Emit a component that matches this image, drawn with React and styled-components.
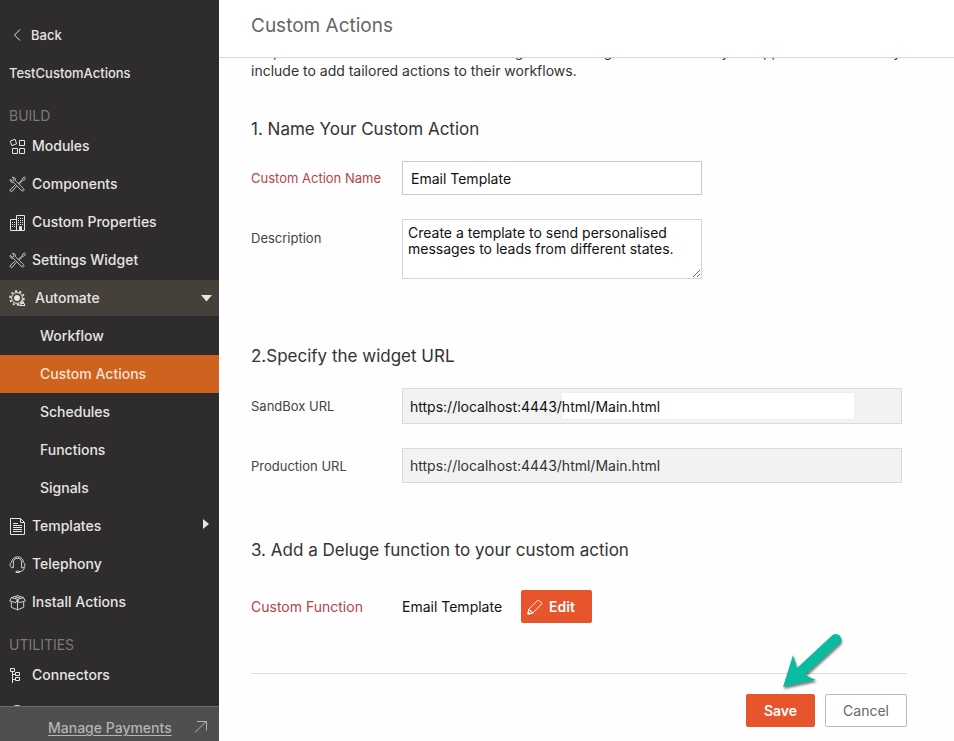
import React, { useState } from "react";
import styled, { createGlobalStyle, css } from "styled-components";

const GlobalStyle = createGlobalStyle`
  * {
    box-sizing: border-box;
  }
  body {
    margin: 0;
    font-family: Inter, "Open Sans", sans-serif;
    font-size: 14px;
    line-height: 20px;
    color: #333;
    background: #fefefe;
  }
  button, input, textarea {
    font: inherit;
  }
`;

const Page = styled.div`
  display: flex;
  height: 100vh;
`;

/* sidebar */
const Sidebar = styled.aside`
  display: flex;
  flex-direction: column;
  flex: 0 0 219px;
  background: #2e2c2d;
  color: #e6e4e4;
  font-weight: 500;
`;

const Nav = styled.nav`
  flex: 1;
  min-height: 0;
  overflow: hidden;
  padding-top: 16px;
`;

const rowStyles = css`
  display: flex;
  align-items: center;
  width: 100%;
  height: 38px;
  padding: 0 7px 0 9px;
  border: 0;
  background: none;
  color: inherit;
  text-decoration: none;
  text-align: left;
`;

const NavLink = styled.a`
  ${rowStyles}
  gap: 6px;
`;

const BackLink = styled(NavLink)`
  gap: 9px;
  padding-left: 13px;
  font-size: 13px;
`;

const ProjectName = styled.div`
  ${rowStyles}
  font-size: 13px;
`;

const GroupToggle = styled.button`
  ${rowStyles}
  gap: 9px;
  height: 36px;
  margin: 1px 0;
  background: #45413a;
  cursor: pointer;
`;

const SubLink = styled.a`
  ${rowStyles}
  padding-left: 40px;
  background: ${(props) => (props.$active ? "#cd631e" : "none")};
  color: ${(props) => (props.$active ? "#f8e3d6" : "inherit")};
`;

const NavHeading = styled.h2`
  margin: 0;
  padding: 14px 9px 0;
  height: 35px;
  font-size: 14px;
  font-weight: 400;
  color: #7b797a;
`;

const Grow = styled.span`
  flex: 1;
`;

const SidebarFooter = styled.div`
  display: flex;
  align-items: center;
  justify-content: space-between;
  flex: 0 0 35px;
  padding: 8px 11px 0 48px;
  border-top: 1px solid #6c6c6c;
  background: #4f4f4f;
`;

const FooterLink = styled.a`
  color: #b3b3b3;
  text-underline-offset: 2px;
`;

/* main column */
const Main = styled.main`
  display: flex;
  flex-direction: column;
  flex: 1;
  min-width: 0;
`;

const Header = styled.header`
  flex: 0 0 58px;
  padding: 13px 32px 0;
  border-bottom: 1px solid #d6d8d7;
  background: #fff;
`;

const Title = styled.h1`
  margin: 0;
  font-size: 19px;
  line-height: 26px;
  font-weight: 400;
  color: #666;
`;

const Content = styled.div`
  flex: 1;
  min-height: 0;
  overflow: hidden;
  padding: 0 47px 0 32px;
`;

const Intro = styled.p`
  margin: -16px 0 0;
  line-height: 19px;
`;

const Section = styled.section`
  padding-top: ${(props) => props.$top}px;
`;

const SectionTitle = styled.h2`
  margin: 0 0 20px;
  font-size: 17px;
  line-height: 24px;
  font-weight: 400;
`;

const Field = styled.div`
  display: grid;
  grid-template-columns: 151px minmax(0, 500px);
  align-items: ${(props) => props.$align || "center"};
  margin-top: ${(props) => (props.$spaced ? 28 : 0)}px;
  & + & {
    margin-top: 24px;
  }
`;

const Label = styled.label`
  font-size: 13px;
  color: ${(props) => (props.$required ? "#b5444b" : "#444")};
`;

const TopLabel = styled(Label)`
  padding-top: 9px;
`;

const FunctionLabel = styled.span`
  color: #b5444b;
`;

const TextInput = styled.input`
  width: 300px;
  height: 34px;
  padding: 0 8px;
  border: 1px solid #c8c8c8;
  background: #fff;
  color: #111;
`;

const TextArea = styled.textarea`
  display: block;
  width: 300px;
  height: 60px;
  padding: 5px;
  border: 1px solid #d6d6d6;
  background: #fff;
  color: #111;
  line-height: 16px;
`;

const UrlBox = styled.div`
  display: flex;
  align-items: baseline;
  height: 36px;
  padding: 3px 46px 0 7px;
  border: 1px solid #dadada;
  background: #f2f2f2;
  color: #111;
`;

const UrlInput = styled.input`
  flex: 1;
  min-width: 0;
  height: 28px;
  padding: 0;
  border: 1px solid #eee;
  border-left: 0;
  background: #fff;
  color: #111;
`;

const ReadOnlyUrl = styled.input`
  width: 100%;
  height: 35px;
  padding: 0 7px;
  border: 1px solid #dadada;
  background: #f2f2f2;
  color: #333;
`;

const FunctionValue = styled.div`
  display: flex;
  align-items: center;
  gap: 19px;
  color: #111;
`;

const Button = styled.button`
  display: inline-flex;
  align-items: center;
  justify-content: center;
  gap: 6px;
  height: 33px;
  padding: 0 17px;
  border: 1px solid ${(props) => (props.$primary ? "#e6552b" : "#bbb")};
  border-radius: 2px;
  background: ${(props) => (props.$primary ? "#e6552b" : "#fff")};
  color: ${(props) => (props.$primary ? "#fff" : "#666")};
  font-weight: ${(props) => (props.$primary ? 600 : 400)};
  cursor: pointer;
`;

const EditButton = styled(Button)`
  padding: 0 16px 0 5px;
`;

const Actions = styled.div`
  position: relative;
  display: flex;
  justify-content: flex-end;
  gap: 10px;
  margin-top: 50px;
  padding-top: 20px;
  border-top: 1px solid #dcdcdc;
`;

const Pointer = styled.svg`
  position: absolute;
  right: 61px;
  top: -44px;
  filter: drop-shadow(1px 2px 1px rgba(0, 0, 0, 0.5));
`;

/* icons */
const Icon = ({ size = 17, children, ...rest }) => (
  <svg
    width={size}
    height={size}
    viewBox={`0 0 ${size} ${size}`}
    fill="none"
    stroke="currentColor"
    aria-hidden="true"
    {...rest}
  >
    {children}
  </svg>
);

const ModulesIcon = () => (
  <Icon>
    <path d="M1.2 3.1 6 1.2l1.6 4.6-4.8 1.9z" />
    <path d="M10.5 2.5h5v5h-5zM3.5 10.5h5v5h-5zM10.5 10.5h5v5h-5z" />
  </Icon>
);

const ToolsIcon = () => (
  <Icon strokeWidth="0.8">
    <path d="M3.2 1.4 5 3.2l-.3 1.5-1.5.3-1.9-1.8C.8 5 2.3 7 4.6 6.4l7.9 8.2c1.4 1.4 3.4-.5 2.1-1.9L6.4 4.7C7 2.4 5.2.7 3.2 1.4z" />
    <path d="m9.6 7.2 3.8-3.9.3-1.3 1.9-1 .9.9-1 1.9-1.4.4-3.8 3.8M7.4 10.2l-4 4.9c-1.3 1.3-3.1-.4-1.9-1.8l4.6-4.2" />
    <path d="m3 13.6.5.5M13 13.3l.6.6" />
  </Icon>
);

const BuildingsIcon = () => (
  <Icon>
    <path d="M1.5 16.5v-11h6v11zM7.5 16.5v-15h8v15z" />
    <path strokeDasharray="1 1" d="M3.5 8v6M5.5 8v6M9.5 4v7M11.5 4v7M13.5 4v7" />
    <path fill="currentColor" d="M10.5 12.5h2v4h-2z" />
  </Icon>
);

const GearIcon = () => (
  <Icon>
    <circle cx="8" cy="8" r="5.4" />
    <circle cx="8" cy="8" r="6.9" strokeWidth="1.6" strokeDasharray="2.2 2.13" />
    <circle cx="8" cy="8" r="3" fill="currentColor" stroke="none" />
    <path d="m10.5 15.5 3-5 2.5 5zM12 14l3-1" />
  </Icon>
);

const PageIcon = () => (
  <Icon>
    <path d="M1.5.5h10l4 4v12h-14z" />
    <path d="M11.5.5v4h4M4 5.5h5M4 7.5h9M4 9.5h9M4 11.5h9M4 13.5h9" />
  </Icon>
);

const HeadsetIcon = () => (
  <Icon strokeWidth="0.9">
    <path d="M2.5 6.3C3.5-1 14-1 14.4 6.3M2.5 6.3C.6 7.2.5 10.7 3 11.7h1.4V5.8M14.4 6.3c2 1.2 2 4.8-.3 5.5h-1.5V5.8M4.4 6c.3-5 7.9-5 8.2 0" />
    <path d="M15.3 11.2c0 3-2 4.3-5.2 4.4M7 15.2h3.4v1.3H7z" />
  </Icon>
);

const BoxIcon = () => (
  <Icon strokeWidth="0.9">
    <path d="m8.5 5.3-6-1.7L.7 6.9l6 1.8 1.8-3.4 1.8 3.4 6-1.8-1.8-3.3zM2.5 3.6l6-2 6 2M8.5 5.3v10.3M2.3 7.6v5.7l6.2 2.5 6.2-2.5V7.6" />
    <path d="m5.5 4.4 3-1.3 3 1.3" />
  </Icon>
);

const TreeIcon = () => (
  <Icon>
    <path d="M1.5 1.5h4v3h-4zM6.5 5.5h4v3h-4zM6.5 10.5h4v3h-4z" />
    <path d="M3.5 4.5V16M3.5 7.5h3M3.5 12.5h3" />
  </Icon>
);

const CircleIcon = () => (
  <Icon>
    <circle cx="8" cy="8" r="7.5" />
  </Icon>
);

const ChevronLeft = () => (
  <svg width="9" height="14" viewBox="0 0 9 14" fill="none" stroke="currentColor" aria-hidden="true">
    <path d="M7 1.5 1.5 7 7 12.5" />
  </svg>
);

const CaretDown = () => (
  <svg width="11" height="7" viewBox="0 0 11 7" fill="currentColor" aria-hidden="true">
    <path d="M0 0h11L5.5 6.5z" />
  </svg>
);

const CaretRight = () => (
  <svg width="9" height="14" viewBox="0 0 9 14" fill="currentColor" aria-hidden="true">
    <path d="M0 0v10l6-5z" />
  </svg>
);

const DiagonalArrow = () => (
  <Icon size={14} stroke="#b3b3b3">
    <path d="M1 11.5 12 .5M3 .5h9.500v9" />
  </Icon>
);

const PencilIcon = () => (
  <Icon size={16}>
    <path d="m1.8 10.3 8.6-8.6q1-.9 2 0l1.8 1.8q.9 1 0 2l-8.6 8.6z" />
    <path d="m1.8 10.3-.9 4.8 4.8-.9z" />
    <path d="m.9 15.1.4-2.2 1.8 1.8z" fill="currentColor" />
  </Icon>
);

const topItems = [
  { label: "Modules", icon: ModulesIcon },
  { label: "Components", icon: ToolsIcon },
  { label: "Custom Properties", icon: BuildingsIcon },
  { label: "Settings Widget", icon: ToolsIcon },
];

const automateItems = ["Workflow", "Custom Actions", "Schedules", "Functions", "Signals"];

const bottomItems = [
  { label: "Templates", icon: PageIcon, expandable: true },
  { label: "Telephony", icon: HeadsetIcon },
  { label: "Install Actions", icon: BoxIcon },
];

const NavItem = ({ label, icon: ItemIcon, expandable }) => (
  <NavLink href="#">
    <ItemIcon />
    {label}
    {expandable && (
      <>
        <Grow />
        <CaretRight />
      </>
    )}
  </NavLink>
);

const SideMenu = () => {
  const [open, setOpen] = useState(true);

  return (
    <Sidebar>
      <Nav>
        <BackLink href="#">
          <ChevronLeft />
          Back
        </BackLink>
        <ProjectName>TestCustomActions</ProjectName>
        <NavHeading>BUILD</NavHeading>
        {topItems.map((item) => (
          <NavItem key={item.label} {...item} />
        ))}
        <GroupToggle type="button" aria-expanded={open} onClick={() => setOpen(!open)}>
          <GearIcon />
          Automate
          <Grow />
          <CaretDown />
        </GroupToggle>
        {open &&
          automateItems.map((label) => (
            <SubLink key={label} href="#" $active={label === "Custom Actions"}>
              {label}
            </SubLink>
          ))}
        {bottomItems.map((item) => (
          <NavItem key={item.label} {...item} />
        ))}
        <NavHeading>UTILITIES</NavHeading>
        <NavItem label="Connectors" icon={TreeIcon} />
        <NavItem icon={CircleIcon} />
      </Nav>
      <SidebarFooter>
        <FooterLink href="#">Manage Payments</FooterLink>
        <DiagonalArrow />
      </SidebarFooter>
    </Sidebar>
  );
};

const App = () => {
  const [name, setName] = useState("Email Template");
  const [description, setDescription] = useState(
    "Create a template to send personalised messages to leads from different states."
  );
  const [path, setPath] = useState("html/Main.html");

  return (
    <>
      <GlobalStyle />
      <Page>
        <SideMenu />
        <Main>
          <Header>
            <Title>Custom Actions</Title>
          </Header>
          <Content>
            <Intro>
              Help users do more on the account using custom widgets that come in your app which others may
              <br />
              include to add tailored actions to their workflows.
            </Intro>

            <Section $top={37}>
              <SectionTitle>1. Name Your Custom Action</SectionTitle>
              <Field>
                <Label htmlFor="action-name" $required>
                  Custom Action Name
                </Label>
                <TextInput id="action-name" value={name} onChange={(e) => setName(e.target.value)} />
              </Field>
              <Field $align="start">
                <TopLabel htmlFor="description">Description</TopLabel>
                <TextArea
                  id="description"
                  value={description}
                  onChange={(e) => setDescription(e.target.value)}
                />
              </Field>
            </Section>

            <Section $top={65}>
              <SectionTitle>2.Specify the widget URL</SectionTitle>
              <Field>
                <Label htmlFor="sandbox-url">SandBox URL</Label>
                <UrlBox>
                  <span>https://localhost:4443/</span>
                  <UrlInput id="sandbox-url" value={path} onChange={(e) => setPath(e.target.value)} />
                </UrlBox>
              </Field>
              <Field>
                <Label htmlFor="production-url">Production URL</Label>
                <ReadOnlyUrl id="production-url" readOnly value="https://localhost:4443/html/Main.html" />
              </Field>
            </Section>

            <Section $top={55}>
              <SectionTitle>3. Add a Deluge function to your custom action</SectionTitle>
              <Field $spaced>
                <FunctionLabel>Custom Function</FunctionLabel>
                <FunctionValue>
                  Email Template
                  <EditButton type="button" $primary>
                    <PencilIcon />
                    Edit
                  </EditButton>
                </FunctionValue>
              </Field>
            </Section>

            <Actions>
              <Button type="button" $primary>
                Save
              </Button>
              <Button type="button">Cancel</Button>
              <Pointer width="64" height="60" viewBox="0 0 64 60" aria-hidden="true">
                <path fill="#0abb9f" d="M1 57 11 25l4 13L50 5.5a5.5 5.5 0 0 1 8 7.5L23 45l11 5z" />
              </Pointer>
            </Actions>
          </Content>
        </Main>
      </Page>
    </>
  );
};

export default App;
